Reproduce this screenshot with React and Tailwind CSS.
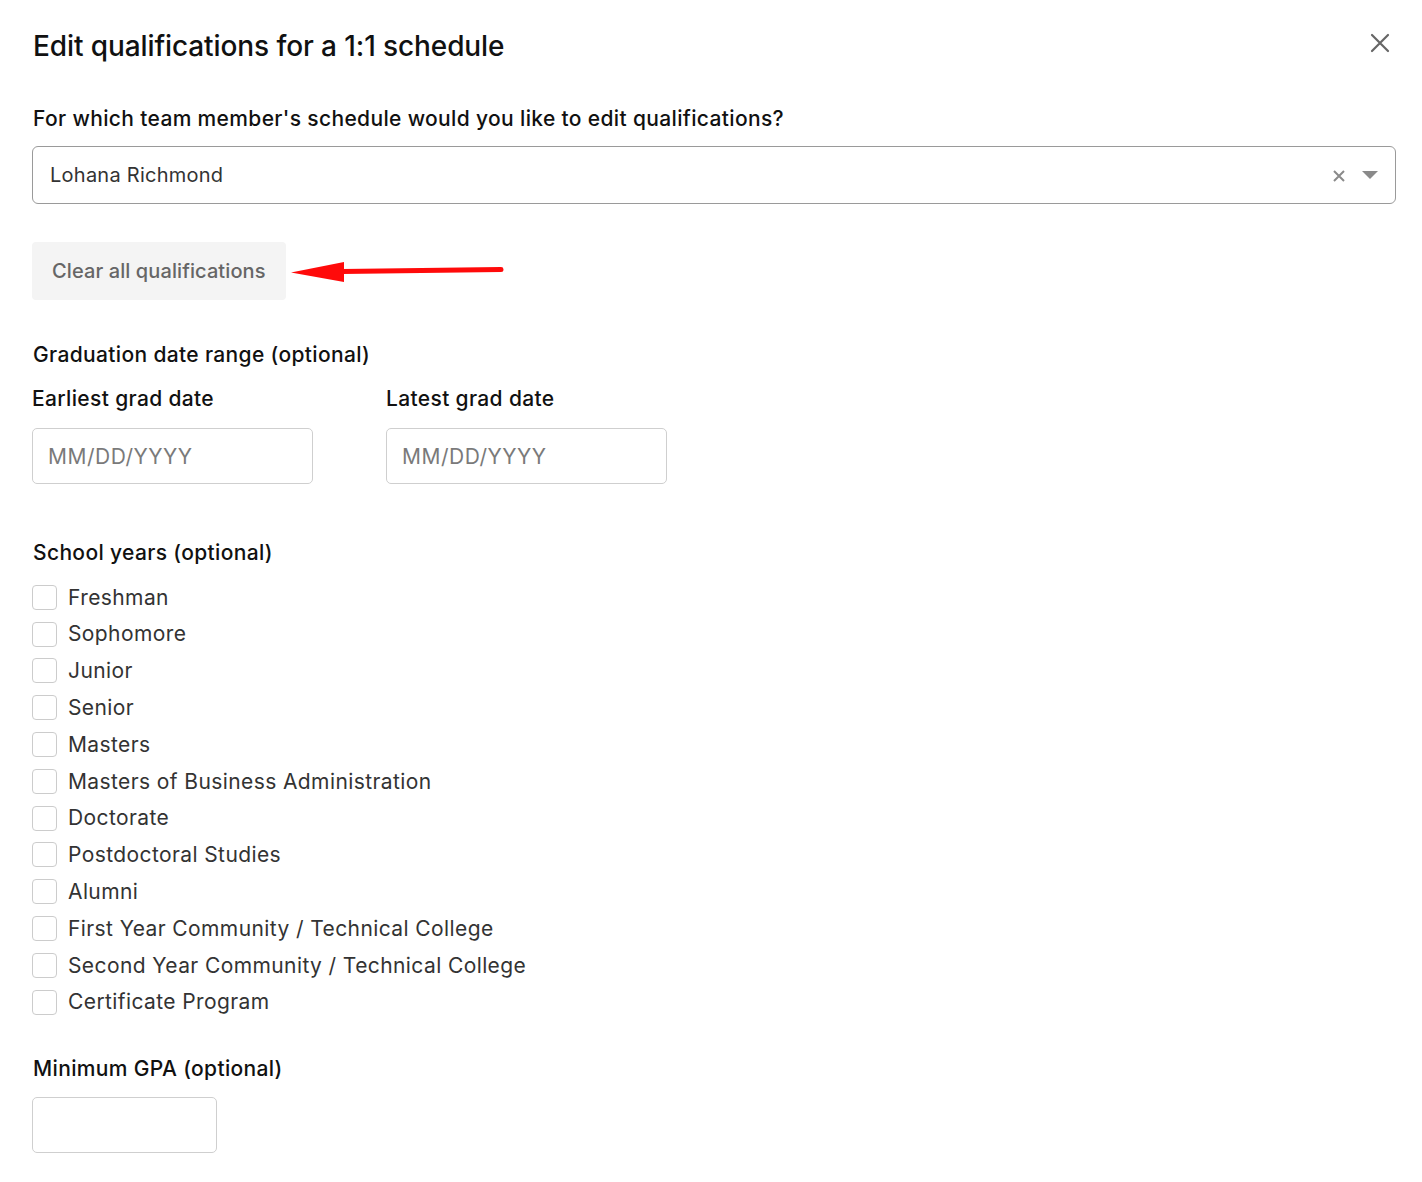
// Edit qualifications modal — 1:1 schedule
import React from 'react';

const SCHOOL_YEARS = [
  'Freshman',
  'Sophomore',
  'Junior',
  'Senior',
  'Masters',
  'Masters of Business Administration',
  'Doctorate',
  'Postdoctoral Studies',
  'Alumni',
  'First Year Community / Technical College',
  'Second Year Community / Technical College',
  'Certificate Program',
];

function DateField({ label }) {
  return (
    <div className="w-[281px]">
      <div className="text-[21px] font-medium tracking-[0.35px] text-[#111] leading-[28px] mb-[15px]">{label}</div>
      <input
        placeholder="MM/DD/YYYY"
        className="block w-full h-[56px] rounded-[5px] border border-[#cfcfcf] px-[15px] text-[21px] tracking-[0.5px] text-[#333] placeholder:text-[#7a7a7a] outline-none"
      />
    </div>
  );
}

export default function App() {
  const [checked, setChecked] = React.useState({});

  return (
    <div className="min-h-[1182px] bg-white font-['Inter','Liberation_Sans',sans-serif] text-[#111]">
      <div className="px-[33px] pt-[28px] pb-[30px]">
        <div className="flex items-start justify-between">
          <h1 className="text-[28px] font-medium leading-[36px] tracking-[-0.1px]">Edit qualifications for a 1:1 schedule</h1>
          <button className="mt-[3px] -mr-[3px] text-[#666]">
            <svg width="24" height="24" viewBox="0 0 24 24" fill="none" stroke="currentColor" strokeWidth="2.2" strokeLinecap="round">
              <path d="M4 4l16 16M20 4L4 20" />
            </svg>
          </button>
        </div>

        <div className="mt-[41px] text-[21px] font-medium tracking-[0.35px] leading-[28px]">
          For which team member's schedule would you like to edit qualifications?
        </div>

        <div className="mt-[13px] -ml-px mr-[-7px] h-[58px] rounded-[6px] border border-[#9a9a9a] flex items-center pl-[17px] pr-[17px]">
          <span className="flex-1 text-[20px] tracking-[0.25px] text-[#333]">Lohana Richmond</span>
          <svg width="14" height="14" viewBox="0 0 14 14" stroke="#8a8a8a" strokeWidth="2" className="mr-[16px] mt-[2px]">
            <path d="M2 2l10 10M12 2L2 12" />
          </svg>
          <svg width="16" height="9" viewBox="0 0 16 9" fill="#8a8a8a">
            <path d="M0 0h16L8 8z" />
          </svg>
        </div>

        <div className="mt-[38px] flex items-center">
          <button className="-ml-px h-[58px] px-[20px] rounded-[4px] bg-[#f4f4f4] text-[20px] font-medium tracking-[0.1px] text-[#666]">
            Clear all qualifications
          </button>
          <svg width="215" height="30" viewBox="0 0 215 30" className="ml-[4px]">
            <path d="M52 15.5 L211 13.5" stroke="#ff0a0a" strokeWidth="5" strokeLinecap="round" />
            <path d="M1 16.5 L54 6 L54 26 Z" fill="#ff0a0a" />
          </svg>
        </div>

        <div className="mt-[41px] text-[21px] font-medium tracking-[0.35px] leading-[28px]">Graduation date range (optional)</div>
        <div className="mt-[16px] -ml-px flex gap-[73px]">
          <DateField label="Earliest grad date" />
          <DateField label="Latest grad date" />
        </div>

        <div className="mt-[55px] text-[21px] font-medium tracking-[0.35px] leading-[28px]">School years (optional)</div>
        <div className="mt-[12px] -ml-px flex flex-col">
          {SCHOOL_YEARS.map((y) => (
            <label key={y} className="flex items-center h-[36.8px] cursor-pointer">
              <input
                type="checkbox"
                checked={!!checked[y]}
                onChange={() => setChecked({ ...checked, [y]: !checked[y] })}
                className="appearance-none w-[25px] h-[25px] rounded-[4px] border border-[#cccccc] bg-white checked:bg-[#333]"
              />
              <span className="ml-[11px] text-[21px] tracking-[0.4px] text-[#333]">{y}</span>
            </label>
          ))}
        </div>

        <div className="mt-[34px] text-[21px] font-medium tracking-[0.35px] leading-[28px]">Minimum GPA (optional)</div>
        <input className="mt-[14px] -ml-px block w-[185px] h-[56px] rounded-[5px] border border-[#cfcfcf] px-[15px] text-[20px] outline-none" />
      </div>
    </div>
  );
}
